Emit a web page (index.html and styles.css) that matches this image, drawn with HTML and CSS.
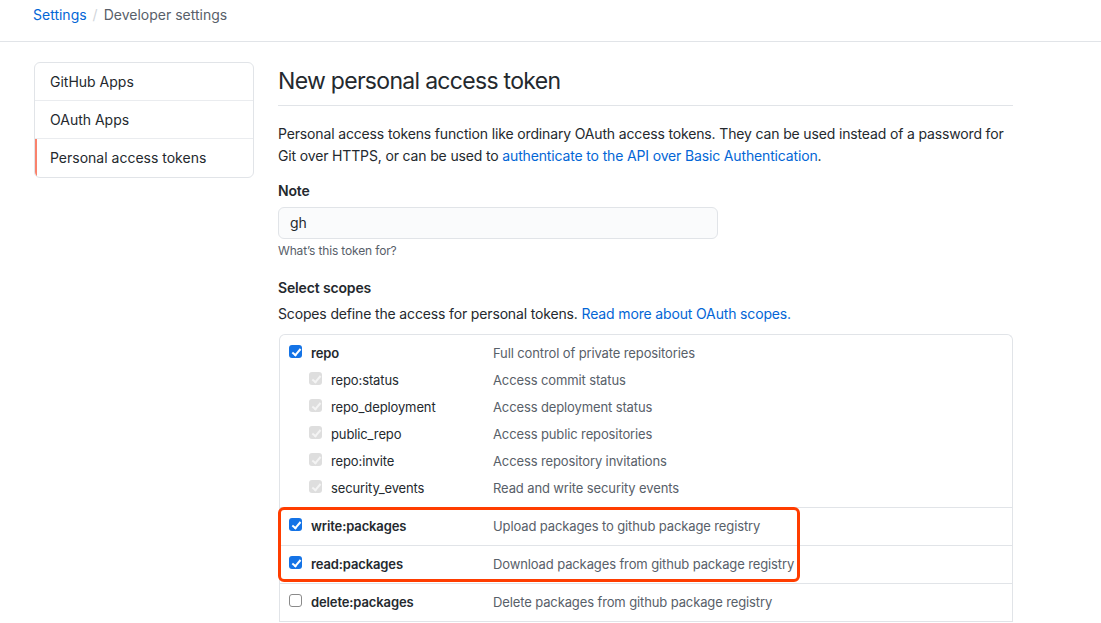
FILE: index.html
```html
<!DOCTYPE html>
<html>
<head>
<meta charset="utf-8">
<link rel="stylesheet" href="styles.css">
</head>
<body>
<header class="topbar">
  <nav class="crumbs"><a href="#" class="link">Settings</a><span class="sep">/</span><span class="current">Developer settings</span></nav>
</header>
<div class="layout">
  <aside class="menu">
    <a href="#" class="menu-item">GitHub Apps</a>
    <a href="#" class="menu-item">OAuth Apps</a>
    <a href="#" class="menu-item selected">Personal access tokens</a>
  </aside>
  <main class="main">
    <h1 class="subhead">New personal access token</h1>
    <p class="intro"><span>Personal access tokens function like ordinary OAuth access tokens. They can be used instead of a password for</span><br><span>Git over HTTPS, or can be used to </span><a href="#" class="link">authenticate to the API over Basic Authentication</a><span>.</span></p>
    <label class="field-label">Note</label>
    <div class="input">gh</div>
    <p class="note">What’s this token for?</p>
    <h3 class="field-label scopes-title">Select scopes</h3>
    <p class="scopes-desc"><span>Scopes define the access for personal tokens. </span><a href="#" class="link">Read more about OAuth scopes.</a></p>
    <div class="scopes-wrap">
      <div class="scopes">
        <div class="group">
          <div class="row"><div class="name"><span class="cb on"></span><b>repo</b></div><div class="desc">Full control of private repositories</div></div>
          <div class="row sub"><div class="name"><span class="cb dis"></span>repo:status</div><div class="desc">Access commit status</div></div>
          <div class="row sub"><div class="name"><span class="cb dis"></span>repo_deployment</div><div class="desc">Access deployment status</div></div>
          <div class="row sub"><div class="name"><span class="cb dis"></span>public_repo</div><div class="desc">Access public repositories</div></div>
          <div class="row sub"><div class="name"><span class="cb dis"></span>repo:invite</div><div class="desc">Access repository invitations</div></div>
          <div class="row sub"><div class="name"><span class="cb dis"></span>security_events</div><div class="desc">Read and write security events</div></div>
        </div>
        <div class="group single"><div class="row"><div class="name"><span class="cb on"></span><b>write:packages</b></div><div class="desc">Upload packages to github package registry</div></div></div>
        <div class="group single"><div class="row"><div class="name"><span class="cb on"></span><b>read:packages</b></div><div class="desc">Download packages from github package registry</div></div></div>
        <div class="group single"><div class="row"><div class="name"><span class="cb"></span><b>delete:packages</b></div><div class="desc">Delete packages from github package registry</div></div></div>
      </div>
      <div class="highlight"></div>
    </div>
  </main>
</div>
</body>
</html>
```
FILE: styles.css
```css
* { box-sizing: border-box; }
body {
  margin: 0;
  font-family: Inter, "Liberation Sans", Arial, sans-serif;
  font-size: 14px;
  letter-spacing: -0.15px;
  color: #24292e;
  background: #fff;
}
.link { color: #0366d6; text-decoration: none; }
.topbar {
  height: 42px;
  border-bottom: 1px solid #e1e4e8;
  padding: 5px 0 0 33px;
}
.crumbs { font-size: 14px; line-height: 20px; letter-spacing: 0; }
.crumbs .sep { color: #d1d5da; margin: 0 6px; }
.crumbs .current { color: #586069; }
.layout {
  display: flex;
  gap: 24px;
  padding: 20px 0 0 34px;
}
.menu {
  width: 220px;
  flex: none;
  align-self: flex-start;
  border: 1px solid #e1e4e8;
  border-radius: 6px;
  display: flex;
  flex-direction: column;
  overflow: hidden;
}
.menu-item {
  display: block;
  height: 38px;
  line-height: 38px;
  padding-left: 15px;
  color: #24292e;
  text-decoration: none;
  border-bottom: 1px solid #eaecef;
  letter-spacing: 0;
}
.menu-item:last-child { border-bottom: 0; }
.menu-item.selected { border-left: 2px solid #f9826c; padding-left: 13px; }
.main { width: 735px; }
.subhead {
  margin: 0;
  font-size: 23px;
  font-weight: 400;
  letter-spacing: -0.7px;
  line-height: 38px;
  padding-bottom: 5px;
  border-bottom: 1px solid #e1e4e8;
}
.intro { margin: 17px 0 0; line-height: 22px; width: 735px; white-space: nowrap; }
.field-label { display: block; font-weight: 600; margin: 13px 0 0; line-height: 22px; font-size: 14px; }
.input {
  margin-top: 5px;
  width: 440px;
  height: 32px;
  border: 1px solid #e1e4e8;
  border-radius: 6px;
  background: #fafbfc;
  padding: 0 11px;
  line-height: 30px;
}
.note { margin: 3px 0 0; font-size: 12px; color: #586069; line-height: 18px; }
.scopes-title { margin-top: 17px; }
.scopes-desc { margin: 4px 0 0; line-height: 22px; }
.scopes-wrap { position: relative; margin-top: 9px; width: 735px; }
.scopes {
  margin-left: 1px;
  border: 1px solid #e1e4e8;
  border-bottom: 0;
  border-radius: 6px 6px 0 0;
  font-size: 13px;
  letter-spacing: -0.12px;
}
.group { border-bottom: 1px solid #e1e4e8; padding: 5px 0; }
.group.single { padding: 0; }
.group.single .row { height: 37px; }
.row { display: flex; align-items: center; height: 27px; padding-bottom: 2px; }
.name { width: 213px; flex: none; display: flex; align-items: center; padding-left: 9px; }
.row.sub .name { padding-left: 29px; }
.name b { font-weight: 600; }
.desc { color: #586069; }
.cb {
  width: 13px;
  height: 13px;
  border-radius: 3px;
  border: 1px solid #8a8a8a;
  background: #fff;
  margin-right: 9px;
  position: relative;
  top: -1px;
  flex: none;
}
.cb.on, .cb.dis { border: 0; }
.cb.on { background: #1473e6; }
.cb.dis { background: #dedede; }
.cb.on::after, .cb.dis::after {
  content: "";
  position: absolute;
  left: 4.5px;
  top: 1.5px;
  width: 3px;
  height: 7px;
  border: solid #fff;
  border-width: 0 2px 2px 0;
  transform: rotate(40deg);
}
.cb.dis::after { border-color: #f4f4f4; }
.highlight {
  position: absolute;
  left: 0;
  top: 173px;
  width: 522px;
  height: 75px;
  border: 3px solid #ff3d00;
  border-radius: 6px;
  pointer-events: none;
}
```
